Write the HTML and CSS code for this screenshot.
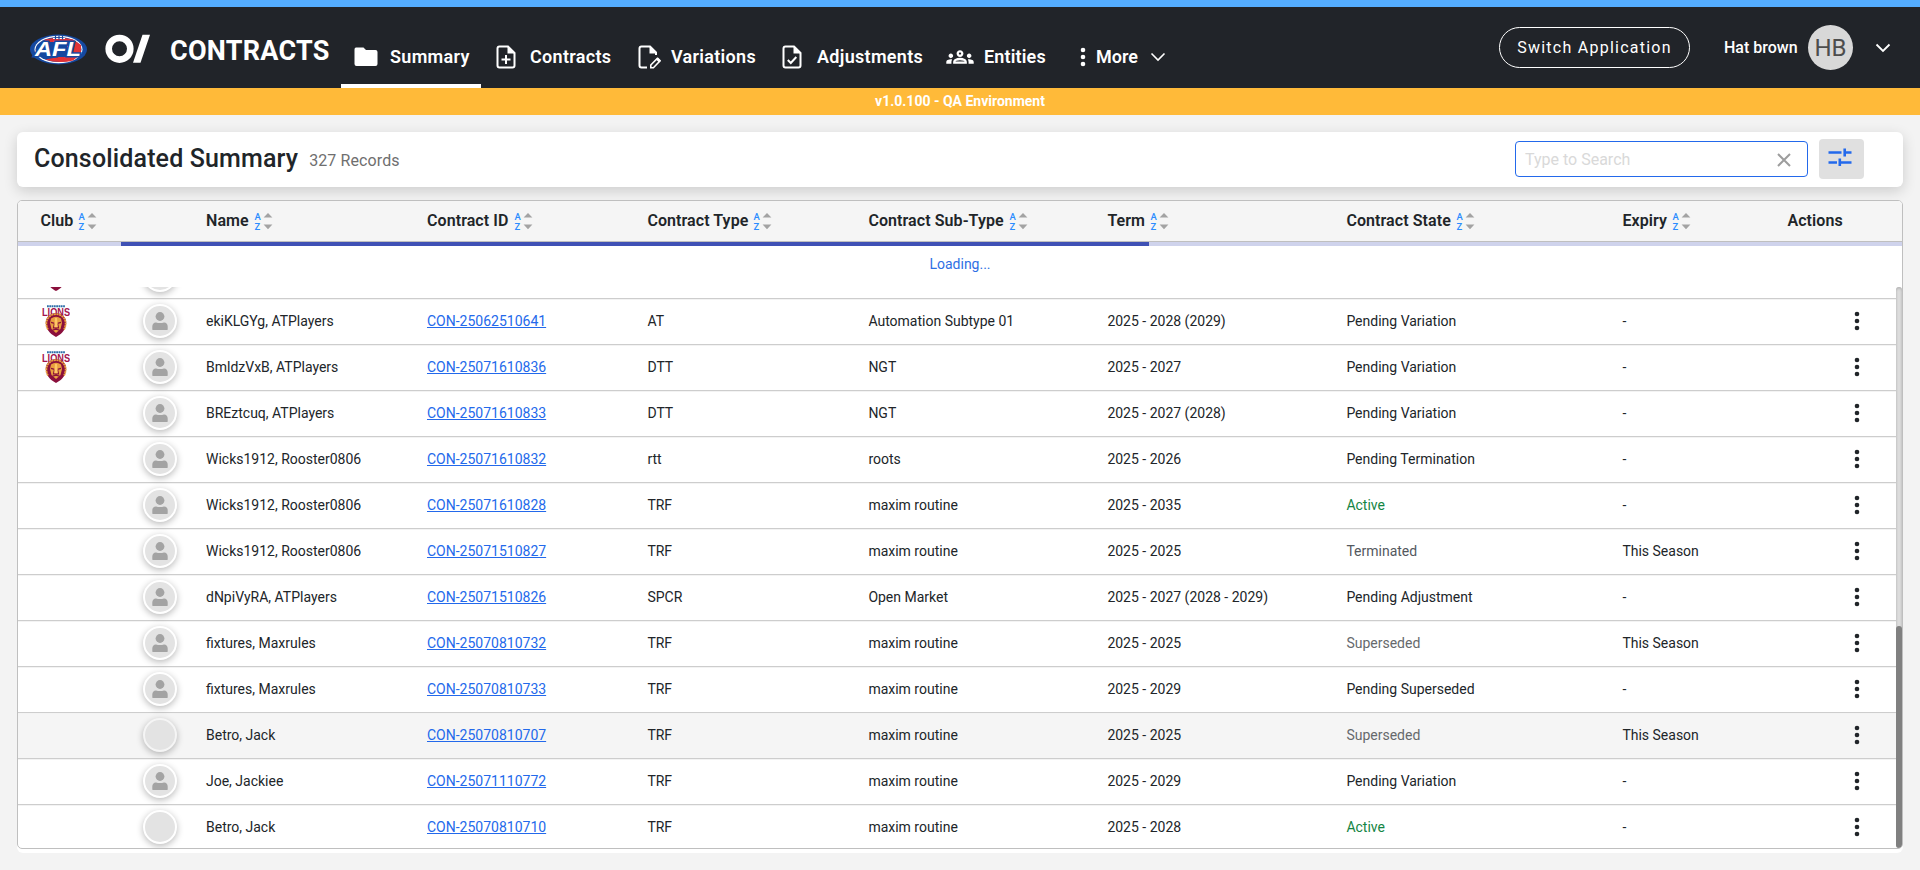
FILE: index.html
```
<!DOCTYPE html>
<html lang="en">
<head>
<meta charset="utf-8">
<title>Contracts - Consolidated Summary</title>
<link rel="stylesheet" href="styles.css">
</head>
<body>
<svg class="defs" width="0" height="0">
  <symbol id="sort" viewBox="0 0 20 20">
    <text class="az" x="0.4" y="8.2">A</text><text class="az" x="0.4" y="18.2">Z</text>
    <path fill="#a3a3a3" d="M9.600 5.600 14 1l4.400 4.600zM9.600 12.600h8.800L14 17.200z"/>
  </symbol>
  <symbol id="person" viewBox="0 0 16 18">
    <circle cx="8" cy="4.500" r="4.400" fill="#a3a3a3"/>
    <path fill="#a3a3a3" d="M.3 17.600V14.500Q.3 10.600 4 10.400q4 1.400 8 0 3.700.2 3.700 4.100v3.100q0 .4-.6.4H.9q-.6 0-.6-.4z"/>
  </symbol>
  <symbol id="dots" viewBox="0 0 6 20">
    <circle cx="3" cy="3" r="2.300"/><circle cx="3" cy="10" r="2.300"/><circle cx="3" cy="17" r="2.300"/>
  </symbol>
  <symbol id="lions" viewBox="0 0 28 32">
    <path stroke="#2d6ea8" stroke-width="2" stroke-dasharray="1.800 .5" d="M5 1.200h18"/>
    <text class="lions-word" x="0" y="10.800" textLength="28" lengthAdjust="spacingAndGlyphs">LIONS</text>
    <path fill="#8a0f3c" d="M14 8c-3 0-5 1-7 2.500-2.500 2-3.500 5-3.200 8 .3 3.500 1.700 6.500 4 9 2 2 4 3.300 6.200 4.500 2.200-1.200 4.200-2.500 6.200-4.500 2.300-2.500 3.700-5.500 4-9 .3-3-.7-6-3.200-8C19 9 17 8 14 8z"/>
    <path fill="none" stroke="#e9a03f" stroke-width="1.800" stroke-dasharray="2.200 .5" d="M6 24.500C3.500 20 3.800 14.500 7.500 11.500 11 8.300 17 8.300 20.500 11.500c3.700 3 4 8.500 1.500 13"/>
    <path fill="#e9a03f" d="M9 13.500q5-3.500 10 0l1 4.500-1.500 6-4.500 4-4.500-4L8 18z"/>
    <path fill="none" stroke="#8a0f3c" stroke-width="1.200" d="M9 17.300l3.500 1M15.500 18.300l3.500-1M12.300 19l-.8 4h5l-.8-4M10.500 25.200l3.500-1 3.500 1"/>
    <path fill="#ffc766" d="M13 13h2l.7 9h-3.400z"/>
  </symbol>
</svg>

<div class="accent"></div>
<header class="nav">
  <svg class="afl" width="58" height="31" viewBox="0 0 58 31">
    <ellipse cx="28.500" cy="15.500" rx="28.500" ry="15" fill="#1548a0"/>
    <ellipse cx="28.500" cy="15.500" rx="24" ry="13.800" fill="#fff"/>
    <ellipse cx="28.500" cy="15.500" rx="23" ry="12.400" fill="#1548a0"/>
    <path fill="#e23236" d="M15 5.500Q29 2 43 5.500L51 11v9l-8 6.500Q29 30 15 25.500L29 23h8V8H14z"/>
    <path stroke="#fff" fill="none" d="M23 4.500h12"/>
    <path stroke="#1548a0" stroke-width="1.200" d="M25.500 1.500v4M29 1.500v4M32.500 1.500v4"/>
    <text class="afl-word" x="5" y="22.300" textLength="46" lengthAdjust="spacingAndGlyphs">AFL</text>
  </svg>
  <svg class="oi" width="46" height="30" viewBox="0 0 46 30">
    <circle cx="14.500" cy="14.800" r="10.800" fill="none" stroke="#fff" stroke-width="6.600"/>
    <path fill="#fff" d="M37.500 .7H45L35.500 28.700H28z"/>
  </svg>
  <div class="app-name">CONTRACTS</div>
  <nav class="menu">
    <a class="item active">
      <svg width="24" height="20" viewBox="0 0 24 20"><path fill="#fff" d="M2 .5h7.500L12 3h9.500Q23.500 3 23.500 5v12q0 2-2 2h-19Q.5 19 .5 17V2.500Q.5.500 2 .5z"/></svg>
      <span>Summary</span></a>
    <a class="item contracts">
      <svg width="20" height="24" viewBox="0 0 20 24"><path fill="none" stroke="#fff" stroke-width="2" d="M12 1.500H3.500Q1.500 1.500 1.500 3.500v17q0 2 2 2h13q2 0 2-2V8z"/><path fill="#fff" d="M11.500 1v7.500H19zM9 10h2v3.500h3.500v2H11V19H9v-3.500H5.500v-2H9z"/></svg>
      <span>Contracts</span></a>
    <a class="item variations">
      <svg width="23" height="24" viewBox="0 0 23 24"><path fill="none" stroke="#fff" stroke-width="2" d="M18 10V7.500L12 1.500H3.500Q1.500 1.500 1.500 3.500v17q0 2 2 2H9"/><path fill="#fff" d="M11.500 1v7.500H19z"/><path fill="none" stroke="#fff" stroke-width="1.600" d="M12.800 22.700v-2.700l6.500-6.500 2.600 2.600-6.500 6.600z"/><path fill="#fff" d="M18 14.500l2-2 3 3-2 2z"/></svg>
      <span>Variations</span></a>
    <a class="item adjustments">
      <svg width="20" height="24" viewBox="0 0 20 24"><path fill="none" stroke="#fff" stroke-width="2" d="M12 1.500H3.500Q1.500 1.500 1.500 3.500v17q0 2 2 2h13q2 0 2-2V8z"/><path fill="#fff" d="M11.500 1v7.500H19z"/><path fill="none" stroke="#fff" stroke-width="2" d="M5.800 15l3 3 5.500-6"/></svg>
      <span>Adjustments</span></a>
    <a class="item entities">
      <svg width="28" height="16" viewBox="0 0 24 14"><path fill="#fff" d="M4 8c1.100 0 2-.9 2-2s-.9-2-2-2-2 .9-2 2 .9 2 2 2zm1.130 1.100C4.760 9.040 4.390 9 4 9c-.99 0-1.930.21-2.780.58C.48 9.900 0 10.620 0 11.430V13h4.500v-1.610c0-.83.23-1.610.63-2.290zM20 8c1.100 0 2-.9 2-2s-.9-2-2-2-2 .9-2 2 .9 2 2 2zm4 3.430c0-.81-.48-1.530-1.220-1.850C21.930 9.210 20.990 9 20 9c-.39 0-.76.040-1.130.1.4.68.63 1.460.63 2.290V13H24v-1.570zM16.240 8.650C15.070 8.130 13.630 7.750 12 7.750s-3.070.390-4.240.9C6.680 9.130 6 10.210 6 11.390V13h12v-1.610c0-1.180-.68-2.260-1.760-2.740zM8.070 11c.09-.23.13-.39.91-.69.970-.38 1.990-.56 3.020-.56s2.050.18 3.020.56c.77.3.81.46.91.69H8.070zM12 3c.55 0 1 .45 1 1s-.45 1-1 1-1-.45-1-1 .45-1 1-1m0-2c-1.660 0-3 1.340-3 3s1.340 3 3 3 3-1.340 3-3-1.340-3-3-3z"/></svg>
      <span>Entities</span></a>
    <a class="item more">
      <svg width="6" height="20" fill="#fff"><use href="#dots"/></svg>
      <span>More</span>
      <svg class="caret" width="16" height="10" viewBox="0 0 16 10"><path fill="none" stroke="#fff" stroke-width="1.600" d="M1.500 1.500 8 8l6.500-6.500"/></svg></a>
  </nav>
  <div class="user">
    <button class="switch">Switch Application</button>
    <span class="user-name">Hat brown</span>
    <span class="initials">HB</span>
    <svg width="16" height="10" viewBox="0 0 16 10"><path fill="none" stroke="#fff" stroke-width="1.800" d="M1.500 1.500 8 8l6.500-6.500"/></svg>
  </div>
</header>
<div class="env">v1.0.100 - QA Environment</div>

<main class="page">
  <section class="card">
    <h1>Consolidated Summary</h1><span class="count">327 Records</span>
    <div class="search"><span>Type to Search</span>
      <svg width="14" height="14" viewBox="0 0 14 14"><path stroke="#9d9d9d" stroke-width="2" d="M1 1l12 12M13 1 1 13"/></svg></div>
    <button class="filter"><svg width="24" height="18" viewBox="0 0 24 18"><path stroke="#2369eb" stroke-width="2.600" d="M.5 4.500h13M16.700.5v8M16.700 4.500h6.800M.5 14.500H9M11.800 10.500v7.500M11.800 14.500h11.700"/></svg></button>
  </section>

  <div class="table-wrap">
  <section class="table">
    <div class="grid head">
      <span>Club<svg><use href="#sort"/></svg></span><span></span><span>Name<svg><use href="#sort"/></svg></span><span>Contract ID<svg><use href="#sort"/></svg></span><span>Contract Type<svg><use href="#sort"/></svg></span><span>Contract Sub-Type<svg><use href="#sort"/></svg></span><span>Term<svg><use href="#sort"/></svg></span><span>Contract State<svg><use href="#sort"/></svg></span><span>Expiry<svg><use href="#sort"/></svg></span><span>Actions</span>
    </div>
    <div class="progress"><div class="bar"></div></div>
    <div class="loading">Loading...</div>
    <div class="viewport">
      <div class="rows">
        <div class="grid row"><svg class="club"><use href="#lions"/></svg><i class="avatar"><svg><use href="#person"/></svg></i></div>
        <div class="grid row"><svg class="club"><use href="#lions"/></svg><i class="avatar"><svg><use href="#person"/></svg></i><span>ekiKLGYg, ATPlayers</span><a>CON-25062510641</a><span>AT</span><span>Automation Subtype 01</span><span>2025 - 2028 (2029)</span><span>Pending Variation</span><span>-</span><svg class="kebab"><use href="#dots"/></svg></div>
        <div class="grid row"><svg class="club"><use href="#lions"/></svg><i class="avatar"><svg><use href="#person"/></svg></i><span>BmldzVxB, ATPlayers</span><a>CON-25071610836</a><span>DTT</span><span>NGT</span><span>2025 - 2027</span><span>Pending Variation</span><span>-</span><svg class="kebab"><use href="#dots"/></svg></div>
        <div class="grid row"><span></span><i class="avatar"><svg><use href="#person"/></svg></i><span>BREztcuq, ATPlayers</span><a>CON-25071610833</a><span>DTT</span><span>NGT</span><span>2025 - 2027 (2028)</span><span>Pending Variation</span><span>-</span><svg class="kebab"><use href="#dots"/></svg></div>
        <div class="grid row"><span></span><i class="avatar"><svg><use href="#person"/></svg></i><span>Wicks1912, Rooster0806</span><a>CON-25071610832</a><span>rtt</span><span>roots</span><span>2025 - 2026</span><span>Pending Termination</span><span>-</span><svg class="kebab"><use href="#dots"/></svg></div>
        <div class="grid row"><span></span><i class="avatar"><svg><use href="#person"/></svg></i><span>Wicks1912, Rooster0806</span><a>CON-25071610828</a><span>TRF</span><span>maxim routine</span><span>2025 - 2035</span><span class="ok">Active</span><span>-</span><svg class="kebab"><use href="#dots"/></svg></div>
        <div class="grid row"><span></span><i class="avatar"><svg><use href="#person"/></svg></i><span>Wicks1912, Rooster0806</span><a>CON-25071510827</a><span>TRF</span><span>maxim routine</span><span>2025 - 2025</span><span class="ended">Terminated</span><span>This Season</span><svg class="kebab"><use href="#dots"/></svg></div>
        <div class="grid row"><span></span><i class="avatar"><svg><use href="#person"/></svg></i><span>dNpiVyRA, ATPlayers</span><a>CON-25071510826</a><span>SPCR</span><span>Open Market</span><span>2025 - 2027 (2028 - 2029)</span><span>Pending Adjustment</span><span>-</span><svg class="kebab"><use href="#dots"/></svg></div>
        <div class="grid row"><span></span><i class="avatar"><svg><use href="#person"/></svg></i><span>fixtures, Maxrules</span><a>CON-25070810732</a><span>TRF</span><span>maxim routine</span><span>2025 - 2025</span><span class="muted">Superseded</span><span>This Season</span><svg class="kebab"><use href="#dots"/></svg></div>
        <div class="grid row"><span></span><i class="avatar"><svg><use href="#person"/></svg></i><span>fixtures, Maxrules</span><a>CON-25070810733</a><span>TRF</span><span>maxim routine</span><span>2025 - 2029</span><span>Pending Superseded</span><span>-</span><svg class="kebab"><use href="#dots"/></svg></div>
        <div class="grid row hover"><span></span><i class="avatar"></i><span>Betro, Jack</span><a>CON-25070810707</a><span>TRF</span><span>maxim routine</span><span>2025 - 2025</span><span class="muted">Superseded</span><span>This Season</span><svg class="kebab"><use href="#dots"/></svg></div>
        <div class="grid row"><span></span><i class="avatar"><svg><use href="#person"/></svg></i><span>Joe, Jackiee</span><a>CON-25071110772</a><span>TRF</span><span>maxim routine</span><span>2025 - 2029</span><span>Pending Variation</span><span>-</span><svg class="kebab"><use href="#dots"/></svg></div>
        <div class="grid row"><span></span><i class="avatar"></i><span>Betro, Jack</span><a>CON-25070810710</a><span>TRF</span><span>maxim routine</span><span>2025 - 2028</span><span class="ok">Active</span><span>-</span><svg class="kebab"><use href="#dots"/></svg></div>
      </div>
      <div class="track"><div class="thumb"></div></div>
    </div>
  </section>
  </div>
</main>
</body>
</html>
```
FILE: styles.css
```
* { box-sizing: border-box; }
body { margin: 0; height: 870px; overflow: hidden; background: #f3f3f3; font: 14px/20px Roboto, "Liberation Sans", sans-serif; color: #212529; }
svg { display: block; flex: none; }
.defs { display: none; }

.accent { height: 7px; background: #54adff; }
.nav { height: 81px; background: #212429; display: flex; color: #fff; padding-left: 30px; }
.afl { margin-top: 27px; }
.afl-word { font: italic 900 20px "Liberation Sans", Arial, sans-serif; fill: #fff; stroke: #1548a0; stroke-width: 3px; paint-order: stroke; }
.oi { margin: 27px 0 0 17px; }
.app-name { width: 171px; margin: 27px 0 0 19px; font-size: 27px; line-height: 34px; font-weight: 700; letter-spacing: .25px; }
.menu { display: flex; height: 81px; font-size: 18px; font-weight: 600; letter-spacing: .3px; }
.item { display: flex; align-items: center; padding-top: 18px; white-space: nowrap; height: 81px; }
.active { width: 140px; padding-left: 13px; padding-top: 22px; gap: 12px; border-bottom: 4px solid #fff; }
.contracts { width: 142px; padding-left: 15px; gap: 14px; }
.variations { width: 146px; padding-left: 15px; gap: 10px; }
.adjustments { width: 163px; padding-left: 13px; gap: 15px; }
.entities { width: 136px; padding-left: 14px; gap: 10px; letter-spacing: .15px; }
.more { padding-left: 12px; gap: 10px; letter-spacing: 0; }
.more .caret { margin-left: 2px; }
.user { margin-left: auto; height: 81px; display: flex; align-items: center; padding: 0 29px 0 0; }
.switch { width: 191px; height: 41px; border: 1px solid #fff; border-radius: 21px; background: none; color: #fff; font: 400 16px/20px Roboto, sans-serif; letter-spacing: 1.25px; padding: 0; }
.user-name { margin-left: 34px; width: 84px; font-size: 16px; font-weight: 500; }
.initials { width: 45px; height: 45px; border-radius: 50%; background: #d8d8d8; color: #4d4d4d; font-size: 24px; font-weight: 400; line-height: 47px; text-align: center; margin-right: 22px; }
.env { height: 27px; background: #ffba39; color: #fff; font-weight: 700; line-height: 27px; text-align: center; }

.page { padding: 17px 17px 0; }
.card { height: 55px; background: #fff; border-radius: 6px; box-shadow: 0 4px 14px rgba(0,0,0,.16); display: flex; align-items: center; padding: 0 39px 0 17px; }
h1 { margin: 0 0 1px; font-size: 25px; line-height: 30px; font-weight: 500; letter-spacing: .15px; }
.count { margin-left: 11px; margin-top: 2px; font-size: 16px; letter-spacing: .1px; color: #6f6f6f; }
.search { margin: -1px 11px 0 auto; width: 293px; height: 36px; border: 1px solid #2369eb; border-radius: 4px; display: flex; align-items: center; justify-content: space-between; padding: 1px 16px 0 9px; color: #d9d9d9; font-size: 16px; }
.filter { width: 45px; height: 40px; margin-top: -1px; border: 0; border-radius: 4px; background: #e0e0e0; padding: 0 3px 4px 0; display: flex; align-items: center; justify-content: center; }

.table-wrap { margin-top: 13px; background: #fff; border-radius: 6px; padding-bottom: 4px; }
.table { height: 649px; border: 1px solid #bfbfbf; border-radius: 5px; overflow: hidden; }
.grid { display: grid; grid-template-columns: 102px 63.600px 221px 220.400px 221px 239px 239px 276px 165px 1fr; align-items: center; padding-left: 22.400px; }
.head { height: 41px; background: #f5f5f5; border-bottom: 1px solid #bfbfbf; font-size: 16px; font-weight: 600; letter-spacing: .08px; }
.head span { display: flex; align-items: center; white-space: nowrap; }
.head svg { width: 20px; height: 20px; margin: 2px 0 0 5px; }
.az { font: 500 9.500px Roboto, sans-serif; fill: #2b8cff; }
.progress { height: 4px; background: #cfd3ec; padding-left: 103px; }
.bar { width: 1028px; height: 4px; background: #3f51b5; }
.loading { height: 41px; padding-top: 8px; text-align: center; color: #2f6fe4; }
.viewport { height: 561px; overflow: hidden; display: flex; }
.rows { flex: 1; margin-top: -34px; }
.row { height: 46px; padding-bottom: 1px; border-bottom: 1px solid #cdcdcd; box-shadow: inset 0 1px #f3f3f3; }
.hover { background: #f5f5f5; }
.row a { color: #2369eb; text-decoration: underline; text-underline-offset: 1px; }
.club { width: 28px; height: 32px; margin-left: 1.600px; }
.lions-word { font: 700 11px "Liberation Sans", Arial, sans-serif; fill: #a3134c; }
.avatar { width: 34px; height: 34px; margin-left: .6px; border: 2px solid #fff; border-radius: 50%; background: #e3e3e3; box-shadow: 0 2px 7px rgba(0,0,0,.28); display: flex; justify-content: center; padding-top: 6px; }
.hover .avatar { border-color: #f5f5f5; }
.avatar svg { width: 16px; height: 18px; }
.kebab { width: 6px; height: 20px; margin: 0 0 0 66.600px; fill: #212529; }
.ok { color: #148544; }
.ended { color: #54585e; }
.muted { color: #66696c; }
.track { width: 6px; height: 561px; background: #dedede; border-radius: 3px; box-shadow: inset 0 1px 3px #aaa; padding-top: 339px; }
.thumb { height: 222px; border-radius: 3px; background: #808080; }
```
